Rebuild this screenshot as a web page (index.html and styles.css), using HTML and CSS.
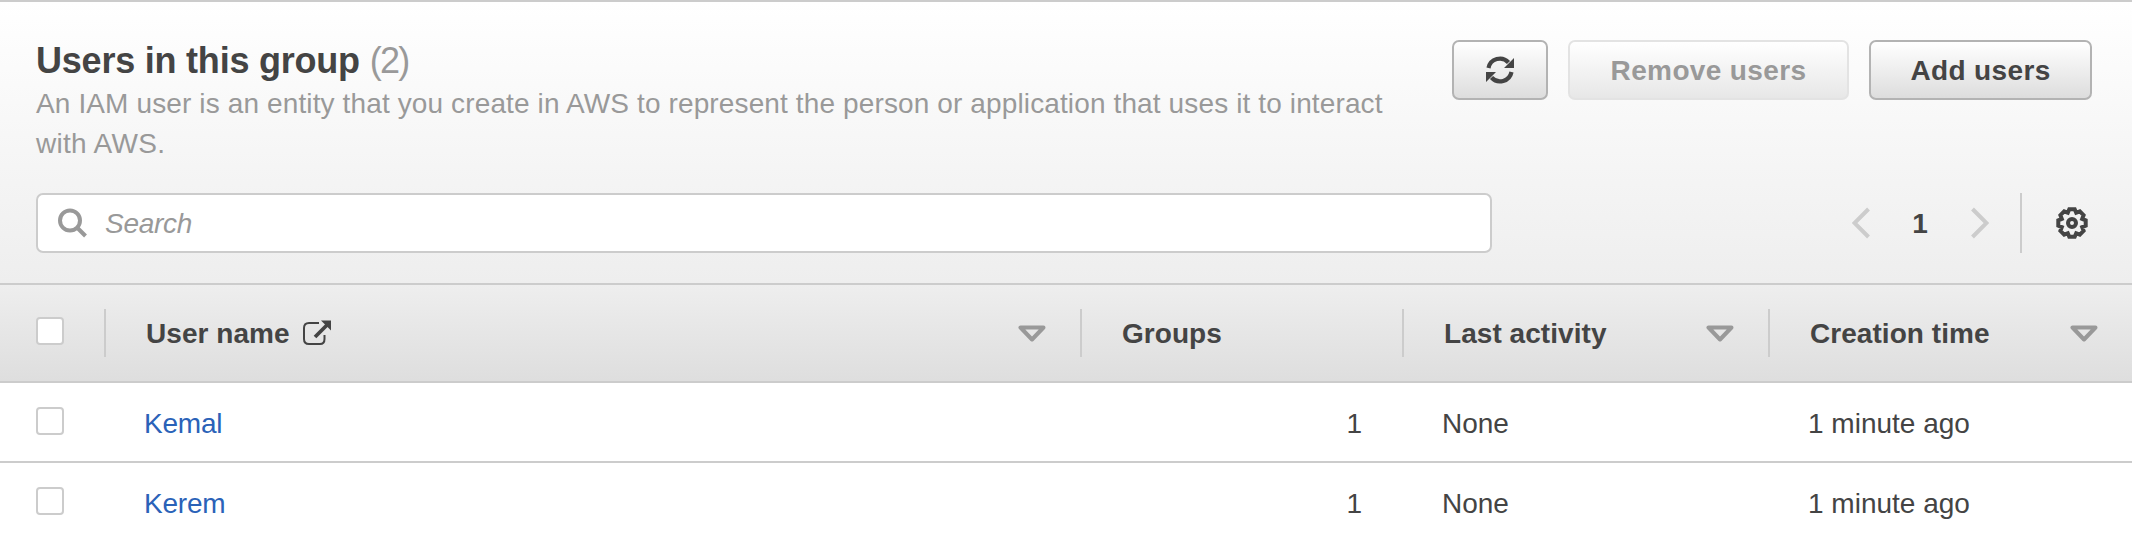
FILE: index.html
```
<!DOCTYPE html>
<html lang="en">
<head>
<meta charset="utf-8">
<title>Users in this group</title>
<link rel="stylesheet" href="styles.css">
</head>
<body>
<main class="panel">
  <section class="top">
    <div class="title-row">
      <div class="title-block">
        <h2 class="title">Users in this group <span class="count">(2)</span></h2>
        <p class="desc">An IAM user is an entity that you create in AWS to represent the person or application that uses it to interact <span class="nowrap">with AWS.</span></p>
      </div>
      <div class="actions">
        <button class="btn btn-refresh" aria-label="Refresh">
          <svg width="28" height="28" viewBox="0 0 28 28" fill="none"><path d="M2.500 12A11.600 11.600 0 0 1 22.500 6.500M25.500 16A11.600 11.600 0 0 1 5.500 21.500" stroke="#444" stroke-width="4.200"/><path d="M28 2V12H18ZM0 26V16H10Z" fill="#444"/></svg>
        </button>
        <button class="btn btn-remove" disabled>Remove users</button>
        <button class="btn btn-add">Add users</button>
      </div>
    </div>
    <div class="tool-row">
      <label class="search">
        <svg width="30" height="30" viewBox="0 0 30 30" fill="none" stroke="#999" stroke-width="4"><circle cx="12" cy="12.500" r="10"/><path d="M19 19.500L27.500 28"/></svg>
        <span class="placeholder">Search</span>
      </label>
      <nav class="pager">
        <svg width="18" height="32" viewBox="0 0 18 32" fill="none" stroke="#ccc" stroke-width="4"><path d="M16.500 2L2.500 16L16.500 30"/></svg>
        <span class="page">1</span>
        <svg width="18" height="32" viewBox="0 0 18 32" fill="none" stroke="#ccc" stroke-width="4"><path d="M1.500 2L15.500 16L1.500 30"/></svg>
        <span class="rule"></span>
        <svg class="gear" width="32" height="32" viewBox="0 0 32 32" fill="none" stroke="#444" stroke-width="4"><circle cx="16" cy="16" r="4"/><path d="M29.700 13.300L29.700 18.700L26.200 20.200L27.600 23.800L23.800 27.600L20.200 26.200L18.700 29.700L13.300 29.700L11.800 26.200L8.200 27.600L4.400 23.800L5.800 20.200L2.300 18.700L2.300 13.300L5.800 11.800L4.400 8.200L8.200 4.400L11.800 5.800L13.300 2.300L18.700 2.300L20.200 5.800L23.800 4.400L27.600 8.200L26.200 11.800Z"/></svg>
      </nav>
    </div>
  </section>
  <section class="grid head">
    <div class="cell check"><span class="box"></span></div>
    <div class="cell"><span class="label">User name</span>
      <svg class="ext" width="28" height="26" viewBox="0 0 28 26" fill="none"><path d="M16 3H6Q1 3 1 8V19Q1 24 6 24H17Q21.500 24 21.500 19V15" stroke="#444" stroke-width="2"/><path d="M12 17L24 5" stroke="#444" stroke-width="3.800"/><path d="M18 0.500H28V10.500Z" fill="#444"/></svg>
      <svg class="sort" width="28" height="17" viewBox="0 0 28 17"><path d="M2.500 2.500H25.500L14 14.500Z" fill="none" stroke="#999" stroke-width="4" stroke-linejoin="round"/></svg></div>
    <div class="cell"><span class="label">Groups</span></div>
    <div class="cell"><span class="label">Last activity</span>
      <svg class="sort" width="28" height="17" viewBox="0 0 28 17"><path d="M2.500 2.500H25.500L14 14.500Z" fill="none" stroke="#999" stroke-width="4" stroke-linejoin="round"/></svg></div>
    <div class="cell"><span class="label">Creation time</span>
      <svg class="sort" width="28" height="17" viewBox="0 0 28 17"><path d="M2.500 2.500H25.500L14 14.500Z" fill="none" stroke="#999" stroke-width="4" stroke-linejoin="round"/></svg></div>
  </section>
  <section class="grid row ruled">
    <div class="cell check"><span class="box"></span></div>
    <div class="cell"><a class="link">Kemal</a></div>
    <div class="cell num">1</div>
    <div class="cell">None</div>
    <div class="cell">1 minute ago</div>
  </section>
  <section class="grid row">
    <div class="cell check"><span class="box"></span></div>
    <div class="cell"><a class="link">Kerem</a></div>
    <div class="cell num">1</div>
    <div class="cell">None</div>
    <div class="cell">1 minute ago</div>
  </section>
</main>
</body>
</html>
```
FILE: styles.css
```
* { box-sizing: border-box; }
body { margin: 0; background: #fff; color: #444; font: 28px/40px "Liberation Sans", Arial, sans-serif; }
.panel { width: 2132px; }
svg { display: block; flex: none; }
.top { height: 285px; padding: 38px 40px 0 36px; border-top: 2px solid #ccc; border-bottom: 2px solid #ccc; background: linear-gradient(#fff, #eee); }
.title-row { display: flex; justify-content: space-between; height: 153px; }
.title-block { width: 1380px; }
.title { margin: 0; font-size: 36px; line-height: 42px; font-weight: bold; letter-spacing: -.22px; }
.count { font-weight: normal; color: #999; letter-spacing: -1.700px; }
.desc { margin: 0; padding-top: 2px; color: #999; letter-spacing: .125px; }
.nowrap { white-space: nowrap; letter-spacing: .3px; }
.actions { display: flex; gap: 20px; }
.btn { height: 60px; padding: 2px 0 0; border: 2px solid #b3b3b3; border-radius: 7px; background: linear-gradient(#fff, #ddd); color: #444; font: bold 28px/54px "Liberation Sans", Arial, sans-serif; letter-spacing: .36px; }
.btn-refresh { width: 96px; padding: 0; display: flex; align-items: center; justify-content: center; }
.btn-remove { width: 281px; color: #999; border-color: #e3e3e3; background: linear-gradient(#fff, #e7e7e7); }
.btn-add { width: 223px; }
.tool-row { display: flex; justify-content: space-between; height: 60px; }
.search { display: flex; align-items: center; width: 1456px; padding-left: 20px; gap: 17px; background: #fff; border: 2px solid #ccc; border-radius: 7px; }
.placeholder { padding-top: 2px; color: #999; font-style: italic; letter-spacing: -.3px; }
.pager { display: flex; align-items: center; padding-right: 4px; }
.page { width: 101px; padding: 2px 1px 0 0; text-align: center; font-weight: bold; }
.rule { width: 2px; height: 60px; margin: 0 34px 0 31px; background: #ccc; }
.grid { display: grid; grid-template-columns: 104px 976px 322px 366px 364px; }
.cell { display: flex; align-items: center; padding-left: 40px; }
.check { padding-left: 36px; }
.box { width: 28px; height: 28px; border: 2px solid #ccc; border-radius: 4px; background: #fff; }
.head { height: 98px; padding: 24px 0; border-bottom: 2px solid #ccc; background: linear-gradient(#eee, #dedede); font-weight: bold; }
.head .cell { height: 48px; border-left: 2px solid #ccc; }
.head .check { border-left: 0; padding-left: 36px; padding-bottom: 4px; }
.label { padding-top: 2px; letter-spacing: .05px; }
.ext { margin-left: 13px; }
.sort { margin-left: auto; margin-right: 34px; }
.row { height: 78px; }
.row .cell { padding-top: 4px; padding-left: 40px; }
.row .check { padding: 0 0 2px 36px; }
.ruled { height: 80px; border-bottom: 2px solid #ccc; }
.row .num { justify-content: flex-end; padding-right: 40px; }
.link { color: #2a62b8; letter-spacing: -.2px; }
```
